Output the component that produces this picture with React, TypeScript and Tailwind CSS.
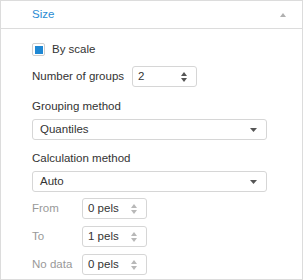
import React from "react";

const font = { fontFamily: '"Liberation Sans", Arial, sans-serif' };

const Spin = ({ disabled }: { disabled?: boolean }) => (
    <div className="flex flex-col items-center gap-[2px]">
        <svg width="6" height="4" viewBox="0 0 6 4">
            <path d="M0 4 L3 0 L6 4 Z" fill={disabled ? "#b8b8b8" : "#555"} />
        </svg>
        <svg width="6" height="4" viewBox="0 0 6 4">
            <path d="M0 0 L6 0 L3 4 Z" fill={disabled ? "#b8b8b8" : "#555"} />
        </svg>
    </div>
);

const NumberBox = ({ value, disabled }: { value: string; disabled?: boolean }) => (
    <div className="w-[65px] h-[21px] flex items-center justify-between pl-[5px] pr-[9px] rounded-[3px] border border-[#d6d6d6] bg-white">
        <span className="text-[11.5px] text-[#333]">{value}</span>
        <Spin disabled={disabled} />
    </div>
);

const Select = ({ value }: { value: string }) => (
    <div className="w-[235px] h-[21px] flex items-center justify-between pl-[7px] pr-[9px] rounded-[3px] border border-[#d6d6d6] bg-white">
        <span className="text-[11.5px] text-[#333]">{value}</span>
        <svg width="7" height="4" viewBox="0 0 7 4">
            <path d="M0 0 L7 0 L3.5 4 Z" fill="#555" />
        </svg>
    </div>
);

const PelsRow = ({ label, value, mt }: { label: string; value: string; mt: string }) => (
    <div className={`flex items-center ${mt}`}>
        <span className="w-[50px] text-[11.5px] text-[#999]">{label}</span>
        <NumberBox value={value} disabled />
    </div>
);

export default function App() {
    return (
        <div style={font} className="w-[303px] h-[280px] bg-white border border-[#dcdcdc] flex flex-col">
            <div className="h-[28px] shrink-0 border-b border-[#dcdcdc] flex items-center justify-between pl-[31px] pr-[16px]">
                <span className="text-[11.5px] text-[#2b8bd3]">Size</span>
                <svg width="6" height="4" viewBox="0 0 6 4">
                    <path d="M0 4 L3 0 L6 4 Z" fill="#b0b0b0" />
                </svg>
            </div>
            <div className="flex flex-col pl-[31px] pt-[14px]">
                <div className="flex items-center gap-[7px] h-[13px]">
                    <div className="w-[13px] h-[13px] rounded-[2px] border border-[#cfcfcf] flex items-center justify-center">
                        <div className="w-[8px] h-[8px] bg-[#1f88d4]" />
                    </div>
                    <span className="text-[11.5px] text-[#333]">By scale</span>
                </div>
                <div className="flex items-center mt-[10px]">
                    <span className="w-[100px] text-[11.5px] text-[#333]">Number of groups</span>
                    <NumberBox value="2" />
                </div>
                <div className="mt-[12px] h-[14px] leading-[14px] text-[11.5px] text-[#333]">Grouping method</div>
                <div className="mt-[6px]">
                    <Select value="Quantiles" />
                </div>
                <div className="mt-[11px] h-[14px] leading-[14px] text-[11.5px] text-[#333]">Calculation method</div>
                <div className="mt-[6px]">
                    <Select value="Auto" />
                </div>
                <PelsRow label="From" value="0 pels" mt="mt-[6px]" />
                <PelsRow label="To" value="1 pels" mt="mt-[7px]" />
                <PelsRow label="No data" value="0 pels" mt="mt-[7px]" />
            </div>
        </div>
    );
}
